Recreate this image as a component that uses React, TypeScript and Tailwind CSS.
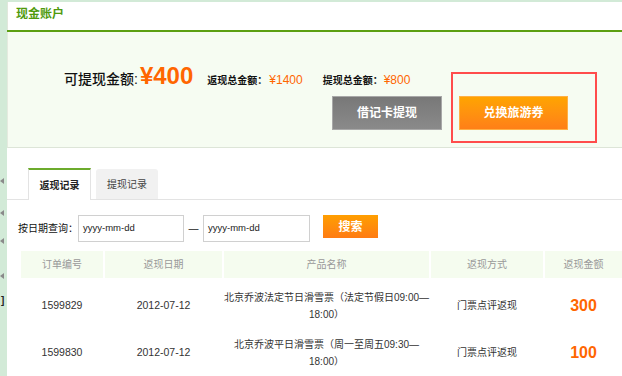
import React from 'react';

const rows = [
  {
    id: '1599829',
    date: '2012-07-12',
    line1: '北京乔波法定节日滑雪票（法定节假日09:00—',
    line2: '18:00）',
    way: '门票点评返现',
    amount: '300',
  },
  {
    id: '1599830',
    date: '2012-07-12',
    line1: '北京乔波平日滑雪票（周一至周五09:30—',
    line2: '18:00）',
    way: '门票点评返现',
    amount: '100',
  },
];

const cols = 'grid grid-cols-[82px_117px_205px_112px_1fr] gap-x-[2px]';

// small grey arrow marks on the left edge strip
const marks = [181, 213, 241, 276];

function App() {
  return (
    <div className="relative w-[622px] h-[376px] overflow-hidden bg-[#d2ead7] pt-[2px] pl-[7px] font-['Liberation_Sans','Noto_Sans_CJK_SC',sans-serif]">
      {marks.map((y) => (
        <svg key={y} className="absolute left-0" style={{ top: y - 3 }} width="4" height="6" viewBox="0 0 4 6">
          <polygon points="4,0 0,3 4,6" fill="#8a8a8a" />
        </svg>
      ))}
      <span className="absolute left-[1px] top-[296px] text-[10px] leading-none font-bold text-[#222]">]</span>

      <div className="h-full bg-white flex flex-col">
        {/* Title */}
        <div className="h-[29px] pt-[5px] pl-[8px] border-l border-[#e1e7dc]">
          <h1 className="text-[12px] leading-[14px] font-bold text-[#4f9a0c]">现金账户</h1>
        </div>
        <div className="h-[2px] bg-[#5c9f12]" />

        {/* Account panel */}
        <div className="relative h-[120px] bg-[#f6fcf2] border-b border-[#dde5d8] border-l border-l-[#e4eadf]">
          <div className="pt-[32px] pl-[56px] h-[56px] flex items-baseline leading-none">
            <span className="text-[14px] font-medium text-[#111]">可提现金额:</span>
            <span className="ml-[2px] text-[24px] font-bold text-[#ff6600]">¥400</span>
            <span className="ml-[14px] text-[10px] font-bold text-[#111]">返现总金额：</span>
            <span className="ml-[2px] text-[12px] text-[#ff6600]">¥1400</span>
            <span className="ml-[20px] text-[10px] font-bold text-[#111]">提现总金额：</span>
            <span className="ml-[1px] text-[12px] text-[#ff6600]">¥800</span>
          </div>
          <div className="mt-[8px] pl-[324px] flex gap-[17px]">
            <button className="w-[110px] h-[34px] border border-[#a8a8a8] bg-linear-to-b from-[#787878] to-[#8a8a8a] text-white text-[12px] font-bold">
              借记卡提现
            </button>
            <button className="w-[109px] h-[34px] border border-[#ffb045] bg-linear-to-b from-[#ffa400] to-[#ff7f17] text-white text-[12px] font-bold">
              兑换旅游券
            </button>
          </div>
          <div className="absolute left-[443px] top-[40px] w-[146px] h-[71px] border-2 border-[#ff4c4c]" />
        </div>

        {/* Tabs */}
        <div className="mt-[20px] h-[32px] flex items-end gap-[5px] pl-[21px] border-b border-[#e3e3e3]">
          <div className="w-[63px] h-[32px] -mb-px bg-white border-t-2 border-t-[#6cab2c] border-x border-x-[#e3e3e3] flex items-center justify-center text-[10px] font-bold text-[#222]">
            返现记录
          </div>
          <div className="w-[62px] h-[30px] bg-[#f1f1f1] rounded-t-[3px] flex items-center justify-center text-[10px] text-[#444]">
            提现记录
          </div>
        </div>

        {/* Date search */}
        <div className="mt-[15px] pl-[11px] flex items-start">
          <span className="w-[60px] h-[27px] flex items-center text-[10px] text-[#111]">按日期查询：</span>
          <div className="w-[106px] h-[27px] border border-[#d0d0d0] pl-[4px] flex items-center text-[9.5px] text-[#222]">yyyy-mm-dd</div>
          <span className="w-[19px] h-[27px] flex items-center justify-center text-[10px] text-[#222]">—</span>
          <div className="w-[107px] h-[27px] border border-[#d0d0d0] pl-[4px] flex items-center text-[9.5px] text-[#222]">yyyy-mm-dd</div>
          <button className="ml-[13px] w-[55px] h-[23px] bg-linear-to-b from-[#ff9f00] to-[#ff7b12] text-white text-[12px] font-bold">
            搜索
          </button>
        </div>

        {/* Table */}
        <div className="mt-[9px] ml-[14px]">
          <div className={`${cols} h-[27px] text-[10px] text-[#999]`}>
            {['订单编号', '返现日期', '产品名称', '返现方式', '返现金额'].map((h) => (
              <div key={h} className="bg-[#f5fcef] flex items-center justify-center">{h}</div>
            ))}
          </div>
          <div className="mt-[4px]">
            {rows.map((r) => (
              <div key={r.id} className={`${cols} h-[47px] items-center text-center text-[10px] text-[#333]`}>
                <span className="text-[10.5px]">{r.id}</span>
                <span className="text-[10.5px]">{r.date}</span>
                <div className="leading-[17px] whitespace-nowrap flex flex-col items-center">
                  <span>{r.line1}</span>
                  <span>{r.line2}</span>
                </div>
                <span>{r.way}</span>
                <span className="text-[16px] font-bold text-[#ff6600]">{r.amount}</span>
              </div>
            ))}
          </div>
        </div>
      </div>
    </div>
  );
}

export default App;
